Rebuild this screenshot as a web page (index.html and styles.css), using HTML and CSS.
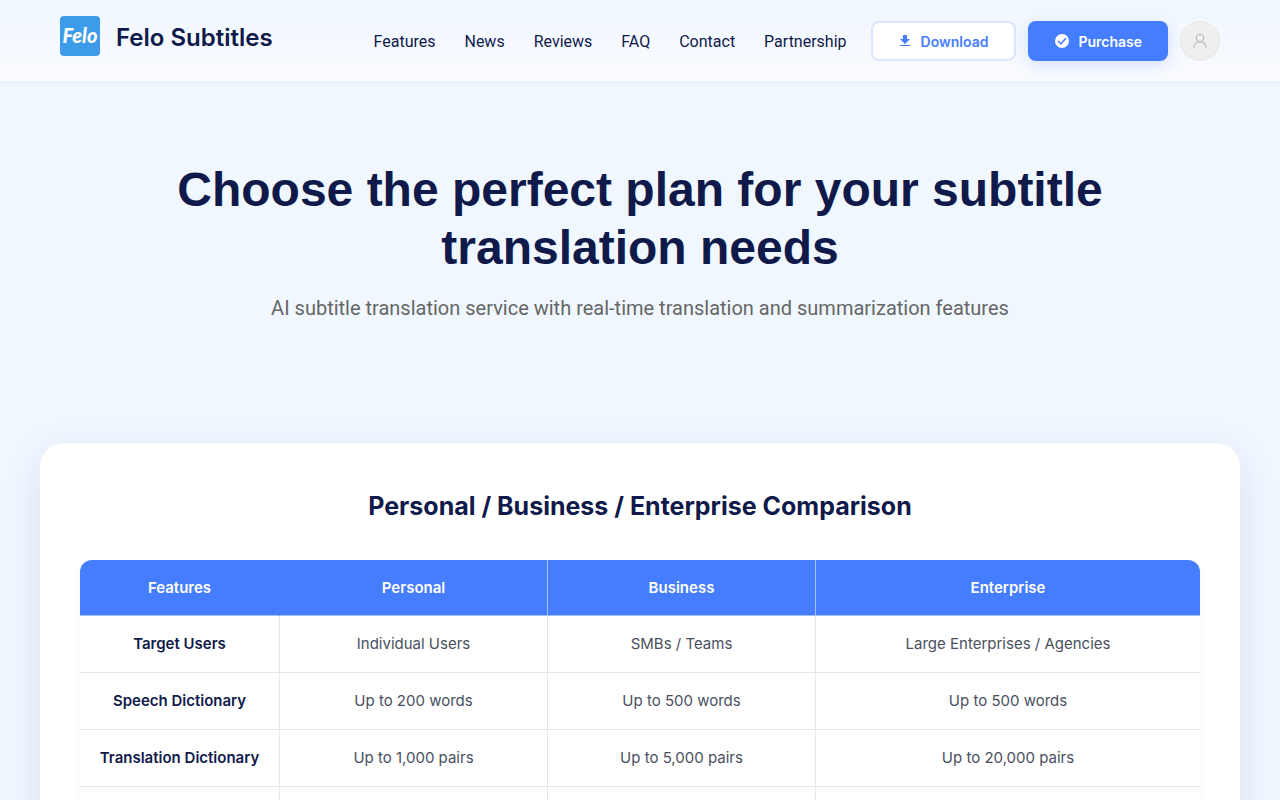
FILE: index.html
```html
<!DOCTYPE html>
<html lang="en">
<head>
    <meta charset="UTF-8">
    <meta name="viewport" content="width=device-width, initial-scale=1.0">
    <title>Felo Subtitles</title>
    <link rel="stylesheet" href="styles.css">
</head>
<body>
    <header class="header">
        <a class="brand" href="#">
            <svg class="brand-logo" viewBox="0 0 40 40" aria-hidden="true">
                <rect width="40" height="40" rx="4" fill="#3c9cea"/>
                <text class="logo-text" x="20" y="27" text-anchor="middle">Felo</text>
            </svg>
            <span class="brand-name">Felo Subtitles</span>
        </a>

        <div class="header-right">
            <nav class="nav">
                <a href="#">Features</a>
                <a href="#">News</a>
                <a href="#">Reviews</a>
                <a href="#">FAQ</a>
                <a href="#">Contact</a>
                <a href="#">Partnership</a>
            </nav>
            <div class="actions">
                <button class="btn btn-download" type="button">
                    <svg width="12" height="14" viewBox="0 0 12 14" aria-hidden="true">
                        <path d="M4 1h4v4h3L6 10 1 5h3zM1 11h10v1H1z" fill="currentColor"/>
                    </svg>
                    Download
                </button>
                <button class="btn btn-purchase" type="button">
                    <svg width="16" height="16" viewBox="0 0 16 16" aria-hidden="true">
                        <circle cx="8" cy="8" r="7" fill="#fff"/>
                        <path d="M4 8l3 3 5-6" fill="none" stroke="#447dff" stroke-width="1.5"/>
                    </svg>
                    Purchase
                </button>
                <button class="avatar" type="button" aria-label="Account">
                    <svg width="16" height="16" viewBox="0 0 16 16" fill="none" stroke="currentColor" stroke-width="1.2" aria-hidden="true">
                        <circle cx="8" cy="5" r="3.7"/>
                        <path d="M1.8 15c0-3.7 2.4-6.3 6.2-6.3s6.2 2.6 6.2 6.3"/>
                    </svg>
                </button>
            </div>
        </div>
    </header>

    <section class="hero">
        <h1>Choose the perfect plan for your subtitle translation needs</h1>
        <p>AI subtitle translation service with real-time translation and summarization features</p>
    </section>

    <section class="card">
        <h2>Personal / Business / Enterprise Comparison</h2>
        <table class="compare">
            <colgroup>
                <col class="col-feature">
                <col class="col-plan">
                <col class="col-plan">
                <col>
            </colgroup>
            <thead>
                <tr>
                    <th scope="col">Features</th>
                    <th scope="col">Personal</th>
                    <th scope="col">Business</th>
                    <th scope="col">Enterprise</th>
                </tr>
            </thead>
            <tbody>
                <tr>
                    <th scope="row">Target Users</th>
                    <td>Individual Users</td>
                    <td>SMBs / Teams</td>
                    <td>Large Enterprises / Agencies</td>
                </tr>
                <tr>
                    <th scope="row">Speech Dictionary</th>
                    <td>Up to 200 words</td>
                    <td>Up to 500 words</td>
                    <td>Up to 500 words</td>
                </tr>
                <tr>
                    <th scope="row">Translation Dictionary</th>
                    <td>Up to 1,000 pairs</td>
                    <td>Up to 5,000 pairs</td>
                    <td>Up to 20,000 pairs</td>
                </tr>
                <tr>
                    <th scope="row"></th>
                    <td></td>
                    <td></td>
                    <td></td>
                </tr>
            </tbody>
        </table>
    </section>
</body>
</html>
```

FILE: styles.css
```css
* {
    box-sizing: border-box;
}

body {
    margin: 0;
    background-color: #f0f7ff;
    color: #0f1a4a;
    font-family: Inter, "Liberation Sans", sans-serif;
}

a {
    color: inherit;
    text-decoration: none;
}

.header {
    display: flex;
    justify-content: space-between;
    align-items: center;
    padding: 16px 60px;
    background: linear-gradient(#f0f7ff, #fafbff);
    border-bottom: 1px solid #e2e8fd;
}

.brand {
    display: flex;
    gap: 16px;
    padding-bottom: 6px;
}

.brand-logo {
    width: 40px;
    height: 40px;
}

.logo-text {
    font-family: Lato, cursive;
    font-size: 20px;
    font-weight: 900;
    font-style: italic;
    fill: #fff;
}

.brand-name {
    font-size: 24px;
    font-weight: 600;
    line-height: 44px;
}

.header-right,
.nav,
.actions {
    display: flex;
    align-items: center;
}

.header-right {
    gap: 24px;
}

.nav {
    gap: 29px;
    font-family: Roboto, sans-serif;
    font-size: 16px;
}

.actions {
    gap: 12px;
}

.btn {
    display: flex;
    align-items: center;
    justify-content: center;
    height: 40px;
    border: none;
    border-radius: 8px;
    font-family: inherit;
    font-size: 14px;
    font-weight: 600;
}

.btn-download {
    gap: 10px;
    padding: 0 26px;
    background-color: #fff;
    border: 2px solid #dbe5fd;
    color: #447dff;
}

.btn-purchase {
    gap: 8px;
    padding: 0 26px;
    background-color: #447dff;
    color: #fff;
    box-shadow: 0 4px 16px rgba(68, 125, 255, 0.2);
}

.avatar {
    display: flex;
    align-items: center;
    justify-content: center;
    width: 40px;
    height: 40px;
    padding: 0;
    border: 1px solid #e6e6e6;
    border-radius: 50%;
    background-color: #efefef;
    color: #bcbcbc;
}

.hero {
    padding: 78px 140px 120px;
    text-align: center;
}

.hero h1 {
    margin: 0 0 16px;
    font-family: "Liberation Sans", Arial, sans-serif;
    font-size: 48px;
    font-weight: 700;
    line-height: 58px;
}

.hero p {
    margin: 0;
    color: #666;
    font-family: Roboto, sans-serif;
    font-size: 20px;
    line-height: 30px;
}

.card {
    margin: 0 40px;
    padding: 40px;
    background-color: #fff;
    border-radius: 24px;
    box-shadow: 0 12px 40px rgba(15, 26, 74, 0.1);
}

.card h2 {
    margin: 0 0 30px;
    font-size: 25px;
    font-weight: 700;
    line-height: 47px;
    text-align: center;
}

.compare {
    width: 100%;
    table-layout: fixed;
    border-collapse: separate;
    border-spacing: 0;
    border-radius: 12px;
    overflow: hidden;
    box-shadow: 0 4px 8px rgba(15, 26, 74, 0.03);
    font-size: 15px;
    line-height: 24px;
    text-align: center;
}

.col-feature {
    width: 200px;
}

.col-plan {
    width: 268px;
}

.compare th,
.compare td {
    height: 57px;
    padding: 16px 8px;
    border-right: 1px solid #e5e7eb;
    border-bottom: 1px solid #e5e7eb;
}

.compare th {
    font-weight: 600;
}

.compare td {
    color: #4a5060;
}

.compare thead th {
    height: 56px;
    padding: 15px 8px;
    background-color: #447dff;
    border-right-color: #a1beff;
    border-bottom-color: #a1beff;
    color: #fff;
}

.compare thead th:first-child {
    border-right-color: #447dff;
}

.compare tr > :last-child {
    border-right: none;
}
```
